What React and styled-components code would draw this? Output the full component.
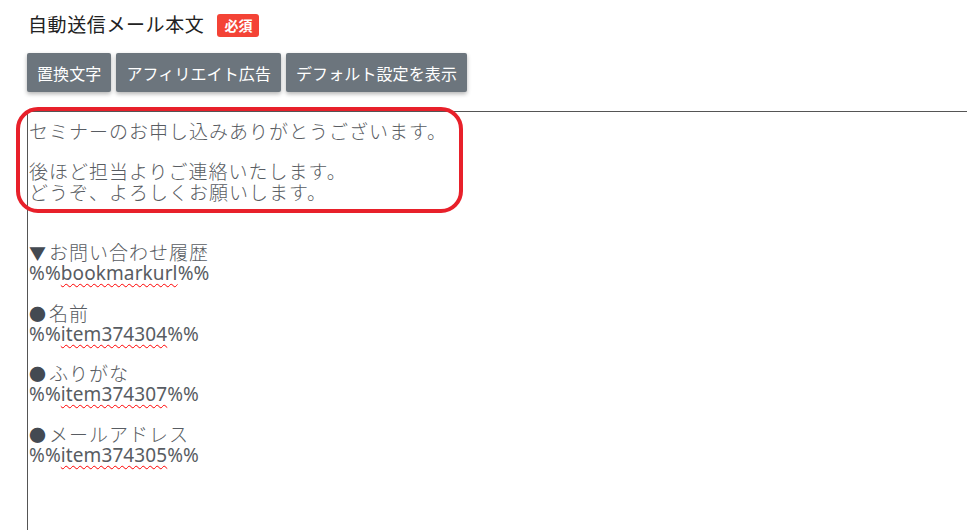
import React from "react";
import styled, { createGlobalStyle } from "styled-components";

const Global = createGlobalStyle`
  html, body { margin: 0; padding: 0; background: #fff; }
  body { overflow: hidden; font-family: "Noto Sans CJK JP", "Noto Sans", sans-serif; }
`;

const Page = styled.div`
  height: 530px;
  padding: 10px 0 0 27px;
  box-sizing: border-box;
  display: flex;
  flex-direction: column;
  overflow: hidden;
`;

const TitleRow = styled.div`
  display: flex;
  align-items: center;
  gap: 13px;
  height: 28px;
  padding-left: 1px;
`;

const Title = styled.span`
  font-size: 19px;
  letter-spacing: 0.6px;
  color: #222;
  line-height: 28px;
`;

const Badge = styled.span`
  background: #f44336;
  color: #fff;
  font-weight: 700;
  font-size: 14px;
  line-height: 23px;
  height: 23px;
  padding: 0 7px;
  border-radius: 3px;
  margin-top: 3px;
`;

const Toolbar = styled.div`
  display: flex;
  gap: 5px;
  margin-top: 15px;
`;

const ToolButton = styled.button`
  height: 39px;
  padding: 0 10px;
  border: none;
  border-radius: 2px;
  background: #6c757d;
  color: #fff;
  font-family: "Noto Sans CJK JP", "Noto Sans", sans-serif;
  font-size: 16px;
  letter-spacing: 0.1px;
  box-shadow: 0 2px 4px rgba(0, 0, 0, 0.3);
  cursor: pointer;
`;

const EditorWrap = styled.div`
  position: relative;
  margin-top: 19px;
  flex: 1;
`;

const Editor = styled.div`
  width: 1000px;
  height: 100%;
  box-sizing: border-box;
  border-top: 1px solid #555;
  border-left: 1px solid #555;
  padding: 9px 0 0 1px;
  font-family: "Noto Sans CJK JP", sans-serif;
  font-size: 19px;
  font-weight: 300;
  letter-spacing: 1px;
  line-height: 20.2px;
  color: #585c62;
  white-space: pre;
`;

const Line = styled.div`
  height: 20.2px;
`;

const Latin = styled.span`
  font-family: "Noto Sans", "Noto Sans CJK JP", sans-serif;
  font-weight: 400;
  letter-spacing: 0.1px;
`;

const Misspelled = styled.span`
  text-decoration: underline wavy #f00;
  text-decoration-thickness: 1px;
  text-underline-offset: 3px;
`;

const Mark = styled.span`
  color: #444a52;
  font-size: 17px;
  margin-right: 2px;
`;

const Highlight = styled.div`
  position: absolute;
  left: -11px;
  top: -4px;
  width: 447px;
  height: 106px;
  box-sizing: border-box;
  border: 4px solid #e8202a;
  border-radius: 22px;
  pointer-events: none;
`;

const lines = [
  { t: "セミナーのお申し込みありがとうございます。" },
  { t: "" },
  { t: "後ほど担当よりご連絡いたします。" },
  { t: "どうぞ、よろしくお願いします。" },
  { t: "" },
  { t: "" },
  { mark: "▼", t: "お問い合わせ履歴" },
  { code: "bookmarkurl" },
  { t: "" },
  { mark: "●", t: "名前" },
  { code: "item374304" },
  { t: "" },
  { mark: "●", t: "ふりがな" },
  { code: "item374307" },
  { t: "" },
  { mark: "●", t: "メールアドレス" },
  { code: "item374305" },
];

export default function App() {
  return (
    <>
      <Global />
      <Page>
        <TitleRow>
          <Title>自動送信メール本文</Title>
          <Badge>必須</Badge>
        </TitleRow>
        <Toolbar>
          <ToolButton>置換文字</ToolButton>
          <ToolButton>アフィリエイト広告</ToolButton>
          <ToolButton>デフォルト設定を表示</ToolButton>
        </Toolbar>
        <EditorWrap>
          <Editor>
            {lines.map((l, i) => (
              <Line key={i}>
                {l.code ? (
                  <Latin>
                    %%<Misspelled>{l.code}</Misspelled>%%
                  </Latin>
                ) : (
                  <>
                    {l.mark && <Mark>{l.mark}</Mark>}
                    {l.t}
                  </>
                )}
              </Line>
            ))}
          </Editor>
          <Highlight />
        </EditorWrap>
      </Page>
    </>
  );
}
